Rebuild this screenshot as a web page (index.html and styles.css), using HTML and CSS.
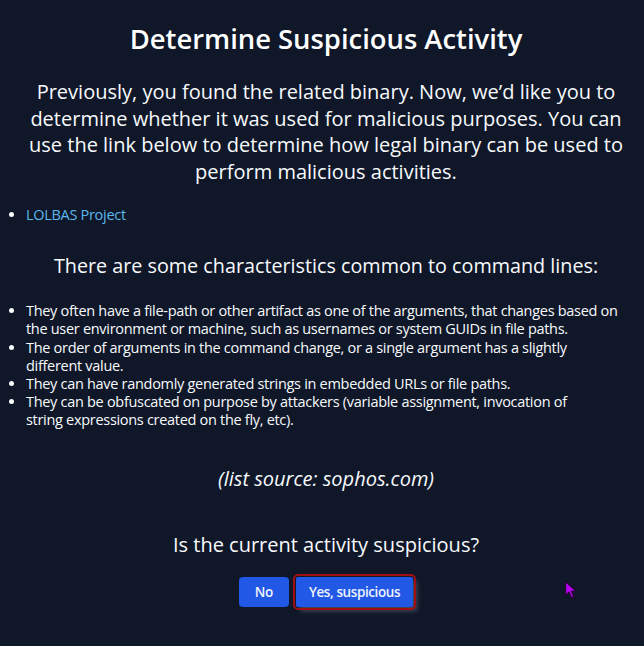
FILE: index.html
```html
<!DOCTYPE html>
<html lang="en">
<head>
<meta charset="utf-8">
<title>Determine Suspicious Activity</title>
<link rel="stylesheet" href="styles.css">
</head>
<body>
<main class="page">
  <h1 class="title">Determine Suspicious Activity</h1>
  <p class="intro">Previously, you found the related binary. Now, we’d like you to determine whether it was used for malicious purposes. You can use the link below to determine how legal binary can be used to perform malicious activities.</p>
  <ul class="links">
    <li><a class="link" href="#">LOLBAS Project</a></li>
  </ul>
  <h2 class="subhead">There are some characteristics common to command lines:</h2>
  <ul class="traits">
    <li>They often have a file-path or other artifact as one of the arguments, that changes based on the user environment or machine, such as usernames or system GUIDs in file paths.</li>
    <li>The order of arguments in the command change, or a single argument has a slightly different value.</li>
    <li>They can have randomly generated strings in embedded URLs or file paths.</li>
    <li>They can be obfuscated on purpose by attackers (variable assignment, invocation of string&nbsp;expressions created on the fly, etc).</li>
  </ul>
  <p class="source">(list source: sophos.com)</p>
  <p class="question">Is the current activity suspicious?</p>
  <div class="actions">
    <button class="btn btn-no">No</button>
    <button class="btn btn-yes">Yes, suspicious</button>
  </div>
  <svg class="cursor" width="18" height="22" viewBox="0 0 18 22" aria-hidden="true">
    <path d="M1.5 1.5 L1.5 15.5 L5 12.2 L7.6 17.8 L10 16.8 L7.5 11.3 L12.3 11.3 Z" fill="#b800f5" stroke="#24082f" stroke-width="1.3" stroke-linejoin="round"/>
  </svg>
</main>
</body>
</html>
```

FILE: styles.css
```css
* { box-sizing: border-box; }
html, body {
  margin: 0;
  background: #0f1729;
  height: 100%;
}
body {
  font-family: "Open Sans", "Noto Sans", sans-serif;
  color: #f8fafc;
}
.page {
  position: relative;
  min-height: 646px;
  padding: 21px 0 0 8px;
}
.title {
  margin: 0;
  font-size: 27.4px;
  line-height: 36px;
  font-weight: 600;
  text-align: center;
  color: #ffffff;
}
.intro {
  max-width: 608px;
  margin: 22px auto 0;
  font-size: 20px;
  line-height: 26.7px;
  text-align: center;
}
.links, .traits {
  margin: 0;
  padding: 0 23px 0 18px;
  font-size: 14.5px;
  line-height: 18.1px;
  letter-spacing: -0.3px;
}
.links { margin-top: 20px; }
.link {
  color: #5cb8ec;
  text-decoration: none;
}
.subhead {
  margin: 27.8px 0 0;
  font-size: 19.75px;
  line-height: 27px;
  font-weight: 400;
  text-align: center;
}
.traits { margin-top: 23.7px; }
.source {
  margin: 35.5px 0 0;
  font-size: 20px;
  line-height: 27px;
  font-style: italic;
  text-align: center;
}
.question {
  margin: 39.2px 0 0;
  font-size: 20px;
  line-height: 27px;
  text-align: center;
}
.actions {
  margin-top: 19.6px;
  display: flex;
  justify-content: center;
  gap: 7px;
}
.btn {
  height: 30px;
  border: 0;
  border-radius: 4px;
  background: #2258e6;
  color: #eef2ff;
  font-family: inherit;
  font-size: 13.5px;
  font-weight: 600;
  letter-spacing: -0.4px;
}
.btn-no { padding: 0 16px; }
.btn-yes {
  padding: 0 13px;
  border-radius: 2px;
  outline: 2px solid #a00f14;
  outline-offset: 1px;
  box-shadow: 4px 4px 5px rgba(110, 110, 120, 0.6);
}
.cursor {
  position: absolute;
  left: 564px;
  top: 580px;
}
```
